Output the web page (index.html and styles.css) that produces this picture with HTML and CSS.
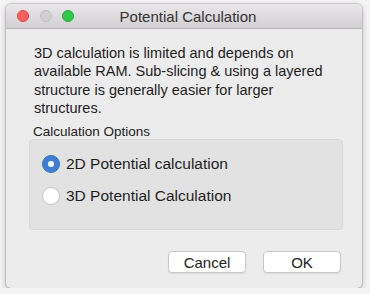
FILE: index.html
```html
<!DOCTYPE html>
<html lang="en">
<head>
    <meta charset="UTF-8">
    <title>Potential Calculation</title>
    <link rel="stylesheet" href="styles.css">
</head>
<body>
    <div class="window">
        <div class="titlebar">
            <div class="lights">
                <span class="light red"></span>
                <span class="light gray"></span>
                <span class="light green"></span>
            </div>
            <div class="title">Potential Calculation</div>
        </div>
        <div class="content">
            <p class="message">3D calculation is limited and depends on<br>available RAM. Sub-slicing &amp; using a layered<br>structure is generally easier for larger<br>structures.</p>
            <div class="group-label">Calculation Options</div>
            <div class="group">
                <label class="radio"><span class="dot checked"></span>2D Potential calculation</label>
                <label class="radio"><span class="dot"></span>3D Potential Calculation</label>
            </div>
            <div class="buttons">
                <button>Cancel</button>
                <button>OK</button>
            </div>
        </div>
    </div>
</body>
</html>
```

FILE: styles.css
```css
body {
    margin: 0;
    background: #f4f4f4;
    font-family: "Liberation Sans", Arial, sans-serif;
    color: #222;
}
.window {
    margin: 4px 0 0 6px;
    width: 356px;
    height: 284px;
    background: #ececec;
    border-radius: 5px;
    box-shadow: 0 0 0 1px rgba(0,0,0,0.12), 0 2px 6px rgba(0,0,0,0.25);
    overflow: hidden;
}
.titlebar {
    position: relative;
    height: 25px;
    background: linear-gradient(#e9e7e9, #d2d0d2);
    border-bottom: 1px solid #b9b9b9;
    box-sizing: border-box;
}
.lights {
    position: absolute;
    left: 11px;
    top: 6px;
    display: flex;
    gap: 10.5px;
}
.light {
    width: 12px;
    height: 12px;
    border-radius: 50%;
    box-sizing: border-box;
}
.red {
    background: #fc605c;
    border: 1px solid #e0443e;
}
.gray {
    background: #d0d0d0;
    border: 1px solid #c0c0c0;
}
.green {
    background: #34c84a;
    border: 1px solid #24a93a;
}
.title {
    text-align: center;
    font-size: 15px;
    line-height: 25px;
    color: #333;
    padding-left: 8px;
}
.content {
    padding: 15px 20px 0 28px;
}
.message {
    margin: 0;
    font-size: 14.5px;
    line-height: 18.3px;
    color: #1e1e1e;
    white-space: nowrap;
}
.group-label {
    margin: 7px 0 0 -1px;
    font-size: 13.5px;
    line-height: 16px;
    color: #222;
}
.group {
    margin: -1px 0 0 -5px;
    width: 314px;
    height: 91px;
    box-sizing: border-box;
    background: #e3e2e3;
    border: 1px solid #d9d8d9;
    border-radius: 4px;
    padding: 15px 0 0 12px;
}
.radio {
    display: flex;
    align-items: center;
    height: 18px;
    margin-bottom: 14px;
    font-size: 15.5px;
    color: #1e1e1e;
}
.dot {
    width: 18px;
    height: 18px;
    border-radius: 50%;
    box-sizing: border-box;
    background: #fff;
    border: 1px solid #c4c4c4;
    margin-right: 6px;
    display: flex;
    align-items: center;
    justify-content: center;
}
.dot.checked {
    background: #3d7fd4;
    border-color: #3572c2;
}
.dot.checked::after {
    content: "";
    width: 6px;
    height: 6px;
    border-radius: 50%;
    background: #fff;
}
.buttons {
    display: flex;
    justify-content: flex-end;
    gap: 17px;
    margin: 21px 1px 0 0;
}
button {
    width: 78px;
    height: 22px;
    background: #fff;
    border: 1px solid #c8c8c8;
    border-radius: 4px;
    font-family: "Liberation Sans", Arial, sans-serif;
    font-size: 15px;
    color: #222;
    padding: 0;
    box-shadow: 0 1px 1px rgba(0,0,0,0.08);
}
```
